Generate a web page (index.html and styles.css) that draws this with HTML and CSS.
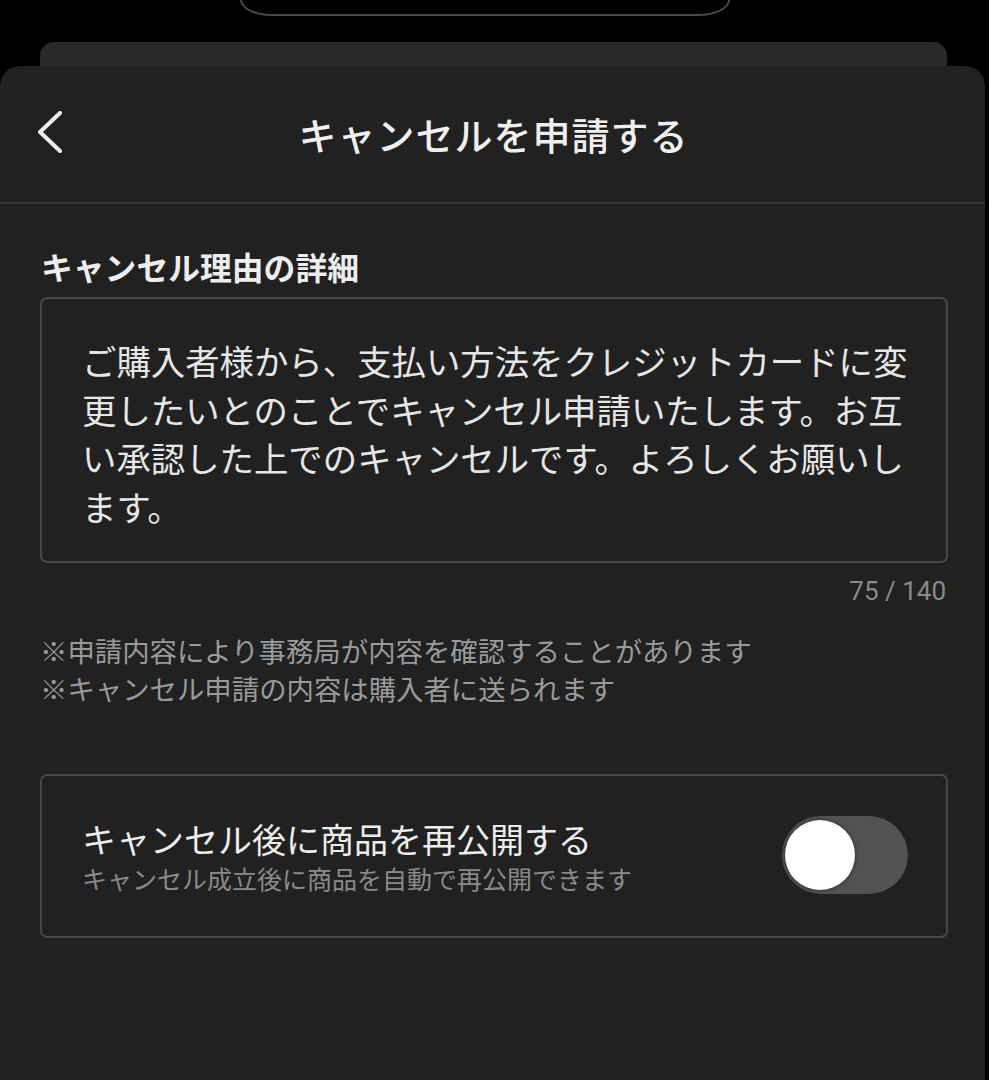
FILE: index.html
```html
<!DOCTYPE html>
<html lang="ja">
<head>
<meta charset="utf-8">
<title>キャンセルを申請する</title>
<link rel="stylesheet" href="styles.css">
</head>
<body>
<div class="screen">
  <div class="topbar"><div class="island"></div></div>
  <div class="behind"></div>
  <div class="sheet">
    <header class="header">
      <button class="back" aria-label="戻る">
        <svg width="26" height="42" viewBox="0 0 26 42"><path d="M23 2 L3 21 L23 40" fill="none" stroke="#ededed" stroke-width="4" stroke-linecap="round" stroke-linejoin="round"/></svg>
      </button>
      <h1 class="title">キャンセルを申請する</h1>
      <span></span>
    </header>
    <div class="divider"></div>
    <main class="content">
      <h2 class="label">キャンセル理由の詳細</h2>
      <div class="textbox">ご購入者様から、支払い方法をクレジットカードに変更したいとのことでキャンセル申請いたします。お互い承認した上でのキャンセルです。よろしくお願いします。</div>
      <div class="counter">75 / 140</div>
      <ul class="notes">
        <li>※申請内容により事務局が内容を確認することがあります</li>
        <li>※キャンセル申請の内容は購入者に送られます</li>
      </ul>
      <div class="option">
        <div class="option-text">
          <div class="option-title">キャンセル後に商品を再公開する</div>
          <div class="option-sub">キャンセル成立後に商品を自動で再公開できます</div>
        </div>
        <div class="toggle"><div class="knob"></div></div>
      </div>
    </main>
  </div>
</div>
</body>
</html>
```

FILE: styles.css
```css
* { box-sizing: border-box; }
html, body {
  margin: 0;
  padding: 0;
  background: #000;
}
body {
  width: 989px;
  height: 1080px;
  overflow: hidden;
  font-family: "Noto Sans CJK JP", "Noto Sans", sans-serif;
  color: #ececec;
}
.screen {
  display: flex;
  flex-direction: column;
  height: 1080px;
}
.topbar {
  height: 42px;
  padding-left: 240px;
  flex: none;
}
.island {
  width: 490px;
  height: 16px;
  border: 2px solid #4a4a4a;
  border-top: none;
  border-radius: 0 0 32px 32px / 0 0 16px 16px;
}
.behind {
  flex: none;
  height: 24px;
  margin: 0 42px 0 40px;
  background: #292929;
  border-radius: 14px 14px 0 0;
}
.sheet {
  flex: 1;
  margin-right: 4px;
  background: #212121;
  border-radius: 20px 20px 0 0;
}
.header {
  height: 136px;
  display: grid;
  grid-template-columns: 1fr auto 1fr;
  align-items: center;
  padding: 0 37px;
}
.back {
  justify-self: start;
  background: none;
  border: none;
  padding: 0;
  display: flex;
  margin-top: -4px;
}
.title {
  margin: 0;
  font-size: 38px;
  font-weight: 500;
  letter-spacing: 1px;
  color: #efefef;
  line-height: 1.2;
  padding-left: 2px;
}
.divider {
  height: 2px;
  background: #363636;
}
.content {
  padding: 44px 37px 0 40px;
}
.label {
  margin: 0;
  font-size: 31.8px;
  line-height: 36px;
  font-weight: 700;
  color: #ededed;
  padding-left: 1px;
}
.textbox {
  margin-top: 13px;
  height: 266px;
  border: 2px solid #474747;
  border-radius: 7px;
  padding: 37px 26px 0 40px;
  font-size: 34.4px;
  line-height: 48.5px;
  color: #e6e6e6;
}
.counter {
  margin-top: 12px;
  text-align: right;
  font-family: Roboto, "Liberation Sans", sans-serif;
  font-size: 26px;
  line-height: 32px;
  color: #8a8a8a;
  padding-right: 2px;
}
.notes {
  list-style: none;
  margin: 24px 0 0 0;
  padding: 0;
  font-size: 27.4px;
  line-height: 38px;
  color: #9a9a9a;
}
.option {
  margin-top: 67px;
  height: 164px;
  border: 2px solid #474747;
  border-radius: 7px;
  padding: 0 38px 0 40px;
  display: flex;
  align-items: center;
  justify-content: space-between;
}
.option-text {
  display: flex;
  flex-direction: column;
}
.option-title {
  font-size: 34px;
  line-height: 44px;
  color: #ededed;
}
.option-sub {
  font-size: 25px;
  line-height: 34px;
  color: #8a8a8a;
}
.toggle {
  width: 126px;
  height: 78px;
  border-radius: 39px;
  background: #525252;
  padding: 4px 3px;
  display: flex;
  align-items: center;
  margin-top: -2px;
}
.knob {
  width: 70px;
  height: 70px;
  border-radius: 50%;
  background: #fff;
  box-shadow: 0 0 4px rgba(0,0,0,0.5);
}
```
